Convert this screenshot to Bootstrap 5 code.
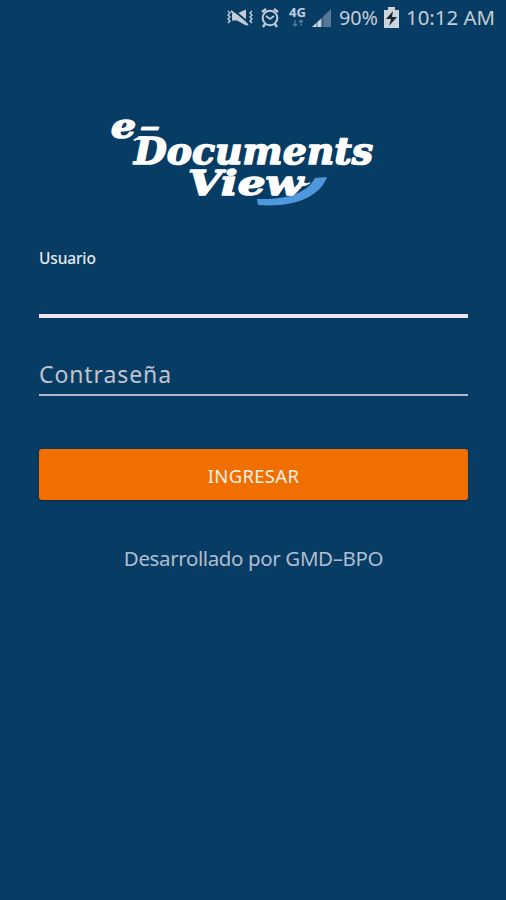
<!DOCTYPE html>
<html lang="es">
<head>
<meta charset="utf-8">
<meta name="viewport" content="width=device-width, initial-scale=1">
<title>e-Documents View</title>
<link href="https://cdn.jsdelivr.net/npm/bootstrap@5.3.0/dist/css/bootstrap.min.css" rel="stylesheet">
<style>
body{background:#073c64;color:#c3c8d3;font-family:"Noto Sans","Open Sans",sans-serif;min-height:900px;overflow-x:hidden}
.status-bar{height:36px;padding-right:10px;font-size:19px;line-height:36px;color:#c3ccd7;white-space:nowrap}
.status-icons{width:110px;height:36px}
.battery-icon{width:17px;height:24px}
.pct{width:40px;margin-left:3px}
.clock{width:90px;margin-left:6px}
.line-text{display:block;width:100%;height:36px;overflow:visible}
.brand-logo{display:block;width:280px;height:100px;margin:74px 0 0 103px;overflow:visible}
.login-form{padding:0 38px 0 39px}
.user-label{display:block;font-size:15.5px;line-height:20px;font-weight:500;color:#e4e8f0;height:20px;margin-top:38px;letter-spacing:-.15px}
.form-control.field{background:transparent;border:0;border-radius:0;box-shadow:none;color:#c3c8d3;padding:0;font-size:23px}
.form-control.field::placeholder{color:#c0c4cd;opacity:1}
.field.user{height:50px;border-bottom:4px solid #eae6f2}
.field.pass{height:40px;margin-top:38px;border-bottom:2px solid #b5b8ca;padding-bottom:3px;letter-spacing:.9px}
.btn.enter{height:51px;margin-top:53px;padding-top:8px;background:#f06f00;color:#fff0e5;border:0;border-radius:3px;font-size:18.5px;letter-spacing:.3px;box-shadow:0 1px 2px #10283f}
.credit{margin-top:43px;font-size:20.5px;line-height:30px;letter-spacing:-.38px;color:#b0bdd0}
</style>
</head>
<body>
<header class="status-bar d-flex align-items-center justify-content-end">
  <svg class="status-icons" viewBox="226 0 110 36" fill="none" stroke="#c3ccd7" stroke-width="1.8">
    <path d="M228 11l2 2-2 2 2 2-2 2 2 2-2 2M252 11l-2 2 2 2-2 2 2 2-2 2 2 2" stroke-width="1.4"/>
    <path d="M232 13.500h5l9-4v16l-9-5h-5z" fill="#c3ccd7" stroke="none"/>
    <path d="M232 9l17 14" stroke="#073c64" stroke-width="2"/><path d="M231 11l17 14" stroke-width="1.8"/>
    <circle cx="270" cy="18" r="7.3" stroke-width="2"/>
    <path d="M262 12l4-3M278 12l-4-3M265 24l-2 3M275 24l2 3" stroke-width="2.3"/><path d="M266 16l4 3 4-3" stroke-width="1.7"/>
    <text x="289" y="17" textLength="17" lengthAdjust="spacingAndGlyphs" font-size="12" font-weight="700" fill="#c3ccd7" stroke="none">4G</text>
    <path d="M295 20v6m-2-2l2 2 2-2M301 26v-6m-2 2l2-2 2 2" stroke="#607f9b" stroke-width="1.2"/>
    <path d="M312 27L331 9v18z" fill="#56799a" stroke="none"/><path d="M312 27l9-8v8z" fill="#d1d8e1" stroke="none"/>
    <path d="M317 20v7M323 14v13" stroke="#244f74" stroke-width=".8"/>
  </svg>
  <div class="pct"><svg class="line-text"><text x="0" y="25" textLength="39" lengthAdjust="spacingAndGlyphs" fill="#c3ccd7">90%</text></svg></div>
  <svg class="battery-icon ms-1" viewBox="0 0 17 24"><path d="M1 4h4V1h7v3h4v18H1z" fill="#ced5dc"/><path d="M10 5L3 13h5l-2 7 8-9H9z" fill="#172b36"/></svg>
  <div class="clock"><svg class="line-text"><text x="0" y="25" textLength="89" lengthAdjust="spacingAndGlyphs" fill="#c3ccd7">10:12 AM</text></svg></div>
</header>
<main>
  <svg class="brand-logo" viewBox="103 110 280 100" role="img" aria-label="e-Documents View">
    <path d="M315 178l12-1c-7 20-34 31-69 28l-1-6c30 1 50-6 58-21z" fill="#4e98dd"/>
    <g fill="#fff" stroke="#fff" stroke-width="1.5" stroke-linejoin="round" font-family="DejaVu Serif,serif" font-weight="700" font-style="italic">
      <text x="111" y="137.500" font-size="33" textLength="25" lengthAdjust="spacingAndGlyphs">e</text>
      <text x="134" y="164" font-size="37" textLength="239" lengthAdjust="spacingAndGlyphs">Documents</text>
      <text x="188" y="194.500" font-size="34" textLength="115" lengthAdjust="spacingAndGlyphs">View</text>
      <path d="M142 127h17l-1 3h-17z" stroke-width="1"/>
      <path d="M133 140q5-4 13-4l4 2q-9-1-15 3z" stroke="none"/>
      <path d="M299 180q6 5 12 2-3 5-12 4z" stroke="none"/>
    </g>
  </svg>
  <form class="login-form">
    <label class="user-label" for="usuario">Usuario</label>
    <input class="form-control field user" id="usuario" type="text">
    <input class="form-control field pass" type="password" placeholder="Contraseña" aria-label="Contraseña">
    <button class="btn enter w-100" type="button">INGRESAR</button>
    <p class="credit text-center mb-0">Desarrollado por GMD–BPO</p>
  </form>
</main>
<script src="https://cdn.jsdelivr.net/npm/bootstrap@5.3.0/dist/js/bootstrap.bundle.min.js"></script>
</body>
</html>
